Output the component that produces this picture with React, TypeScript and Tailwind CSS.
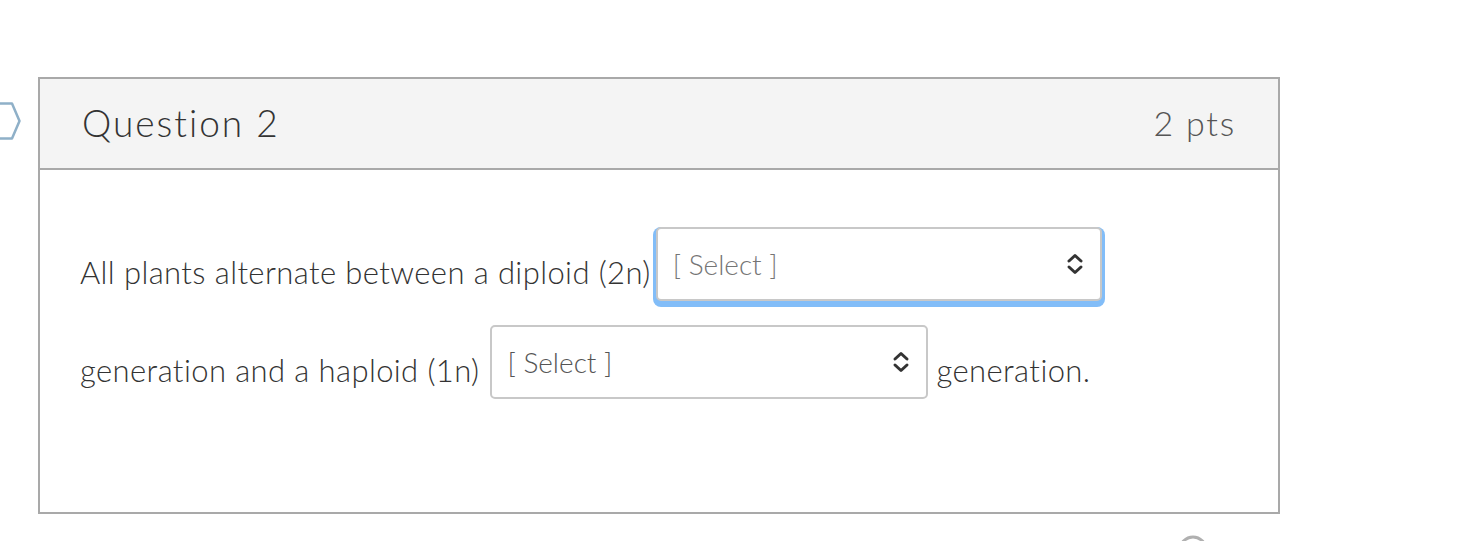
import React from "react";

function Chevron({ color }: { color: string }) {
  return (
    <svg width="18" height="22" viewBox="0 0 18 22" fill="none">
      <path d="M3 8 L9 2.5 L15 8" stroke={color} strokeWidth="3" strokeLinecap="round" strokeLinejoin="round" />
      <path d="M3 14 L9 19.5 L15 14" stroke={color} strokeWidth="3" strokeLinecap="round" strokeLinejoin="round" />
    </svg>
  );
}

function Select({ width, focused, textColor }: { width: string; focused?: boolean; textColor: string }) {
  return (
    <div
      className={`${width} h-[74px] shrink-0 rounded-[5px] border-2 border-[#c8c8c8] bg-white flex items-center justify-between pl-[15px] pr-[16px] ${
        focused ? "shadow-[0_3px_0_3px_#82bdf8]" : ""
      }`}
    >
      <span className={`text-[28px] font-light ${textColor}`}>[ Select ]</span>
      <Chevron color="#333" />
    </div>
  );
}

export default function App() {
  return (
    <div className="relative h-[541px] w-[1458px] overflow-hidden bg-white" style={{ fontFamily: "Lato, 'Open Sans', sans-serif" }}>
      <svg className="absolute left-0 top-[102px]" width="24" height="38" viewBox="0 0 24 38" fill="none">
        <path d="M-2 1.5 L12 1.5 L19.5 19 L12 36.5 L-2 36.5" stroke="#8fb0c8" strokeWidth="2.5" strokeLinejoin="round" />
      </svg>
      <svg className="absolute left-[1178px] top-[535px]" width="30" height="30" viewBox="0 0 30 30">
        <circle cx="15" cy="15" r="13" fill="none" stroke="#b0b0b0" strokeWidth="3" />
      </svg>

      <div className="ml-[38px] mt-[77px] w-[1242px] border-2 border-[#a9a9a9]">
        <div className="h-[91px] bg-[#f4f4f4] border-b-2 border-[#a9a9a9] flex items-center justify-between pl-[42px] pr-[42px]">
          <span className="text-[37px] font-light text-[#333] tracking-[2px] -mt-[2px]">Question 2</span>
          <span className="text-[34px] font-light text-[#555] tracking-[1.8px] -mt-[2px]">2 pts</span>
        </div>
        <div className="h-[342px] pl-[40px] pt-[57px] flex flex-col gap-[24px]">
          <div className="flex items-center">
            <span className="text-[31px] font-light text-[#333] tracking-[0.4px] mt-[16px] mr-[5px]">All plants alternate between a diploid (2n)</span>
            <Select width="w-[446px]" focused textColor="text-[#757575]" />
          </div>
          <div className="flex items-center">
            <span className="text-[31px] font-light text-[#333] tracking-[0.4px] mt-[17px] mr-[11px]">generation and a haploid (1n)</span>
            <Select width="w-[438px]" textColor="text-[#555]" />
            <span className="text-[31px] font-light text-[#333] tracking-[0.4px] mt-[17px] ml-[8px]">generation.</span>
          </div>
        </div>
      </div>
    </div>
  );
}
